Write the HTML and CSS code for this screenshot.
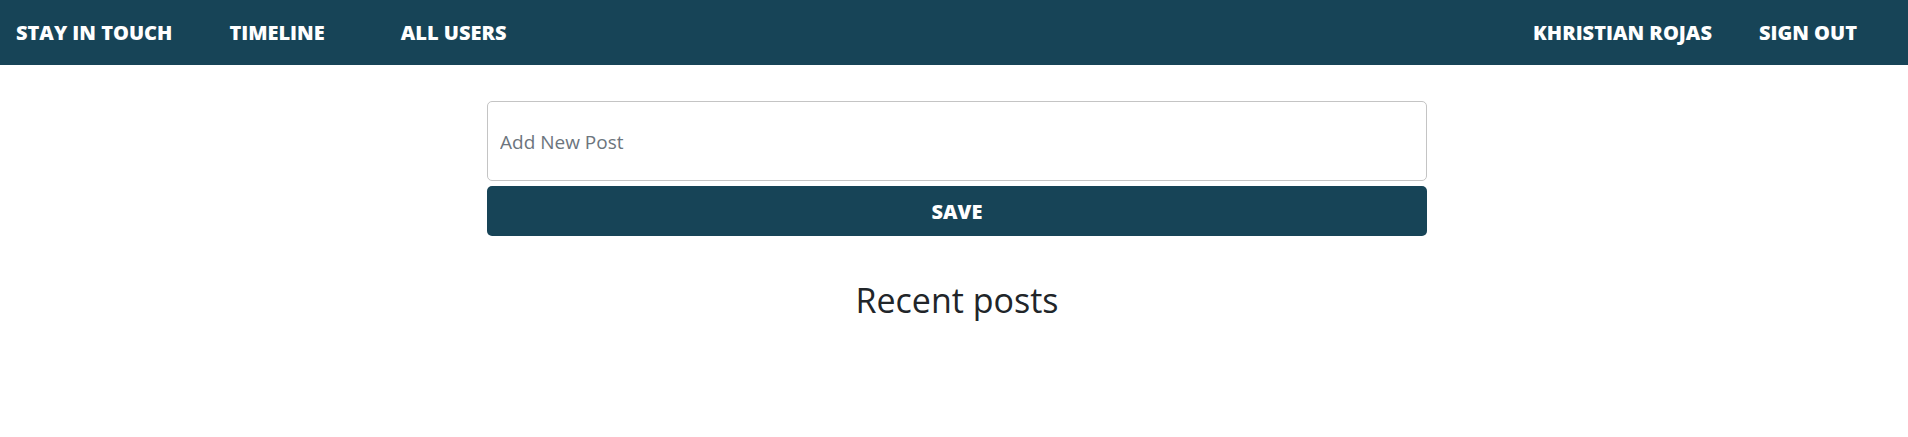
FILE: index.html
```html
<!DOCTYPE html>
<html lang="en">
<head>
<meta charset="utf-8">
<title>Stay in touch</title>
<link rel="stylesheet" href="styles.css">
</head>
<body>
<nav class="navbar">
  <div class="nav-left">
    <a class="brand" href="#">STAY IN TOUCH</a>
    <a class="nav-link timeline" href="#">TIMELINE</a>
    <a class="nav-link users" href="#">ALL USERS</a>
  </div>
  <div class="nav-right">
    <a class="nav-link" href="#">KHRISTIAN ROJAS</a>
    <a class="nav-link" href="#">SIGN OUT</a>
  </div>
</nav>
<main class="main">
  <div class="container">
    <form class="post-form">
      <input class="post-input" type="text" placeholder="Add New Post">
      <button class="save-btn" type="button">SAVE</button>
    </form>
    <h1 class="title">Recent posts</h1>
  </div>
</main>
</body>
</html>
```
FILE: styles.css
```css
* { box-sizing: border-box; }
html, body { margin: 0; padding: 0; background: #fff; }
body {
  font-family: "Open Sans", "Noto Sans", "DejaVu Sans", sans-serif;
  color: #212529;
}
.navbar {
  height: 65px;
  background: #174457;
  display: flex;
  align-items: center;
  justify-content: space-between;
  padding: 0 51px 0 16px;
}
.nav-left, .nav-right { display: flex; align-items: center; }
.navbar a {
  color: #fff;
  text-decoration: none;
  font-weight: 800;
  font-size: 20px;
  line-height: 24px;
  white-space: nowrap;
}
.timeline { margin-left: 57px; }
.users { margin-left: 76px; }
.nav-right .nav-link + .nav-link { margin-left: 47px; }

.main { display: flex; justify-content: center; padding: 36px 0 0 6px; }
.container { width: 940px; }
.post-form { display: flex; flex-direction: column; gap: 5px; }
.post-input {
  height: 80px;
  border: 1px solid #c4c4c4;
  border-radius: 5px;
  padding: 2px 12px 0;
  font-family: "Open Sans", "Noto Sans", sans-serif;
  font-size: 19px;
  color: #212529;
  outline: none;
}
.post-input::placeholder { color: #6c757d; }
.save-btn {
  height: 50px;
  border: none;
  border-radius: 5px;
  background: #174457;
  color: #fff;
  font-family: "Open Sans", "Noto Sans", sans-serif;
  font-weight: 800;
  font-size: 20px;
  cursor: pointer;
}
.title {
  margin: 40px 0 0;
  text-align: center;
  font-weight: 500;
  font-size: 34px;
  line-height: 48px;
}
```
